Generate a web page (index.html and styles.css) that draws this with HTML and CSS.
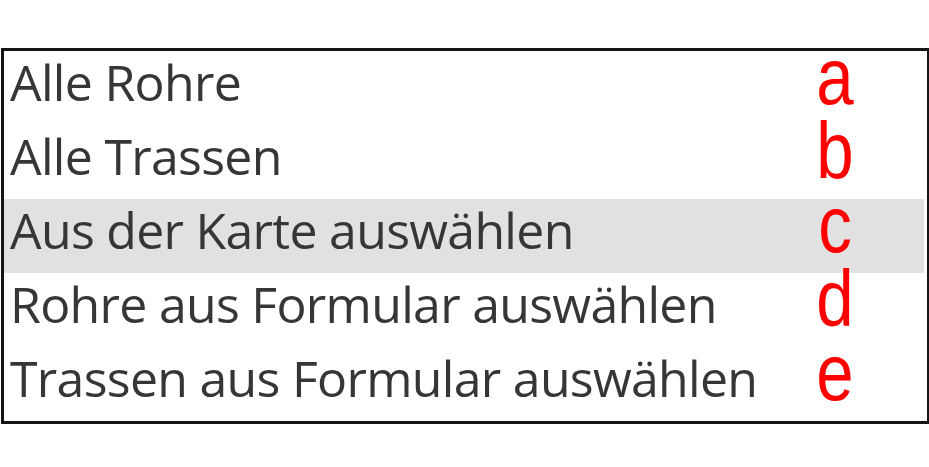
FILE: index.html
```html
<!DOCTYPE html>
<html>
<head>
<meta charset="utf-8">
<link rel="stylesheet" href="styles.css">
</head>
<body>
<div class="page">
  <ul class="list">
    <li class="item"><span class="label">Alle Rohre</span><span class="tag">a</span></li>
    <li class="item"><span class="label">Alle Trassen</span><span class="tag">b</span></li>
    <li class="item selected"><span class="label">Aus der Karte auswählen</span><span class="tag">c</span></li>
    <li class="item"><span class="label">Rohre aus Formular auswählen</span><span class="tag">d</span></li>
    <li class="item"><span class="label">Trassen aus Formular auswählen</span><span class="tag">e</span></li>
  </ul>
</div>
</body>
</html>
```
FILE: styles.css
```css
html, body {
  margin: 0;
  padding: 0;
  background: #ffffff;
}
.page {
  padding: 48px 0 0 1px;
}
.list {
  list-style: none;
  margin: 0;
  padding: 0 3px 0 0;
  width: 920px;
  border: 3px solid #151515;
}
.item {
  display: flex;
  align-items: flex-start;
  height: 74px;
  padding-left: 6px;
}
.selected {
  background: #e1e1e1;
}
.label {
  flex: 1;
  white-space: nowrap;
  font-family: "Open Sans", sans-serif;
  font-size: 50px;
  letter-spacing: -0.7px;
  color: #363636;
  line-height: 62px;
}
.tag {
  display: inline-block;
  width: 100px;
  margin-right: 39px;
  text-align: center;
  font-family: "Liberation Sans", Arial, sans-serif;
  font-size: 80px;
  line-height: 52px;
  color: #ff0000;
  transform: scaleX(0.84);
}
```
